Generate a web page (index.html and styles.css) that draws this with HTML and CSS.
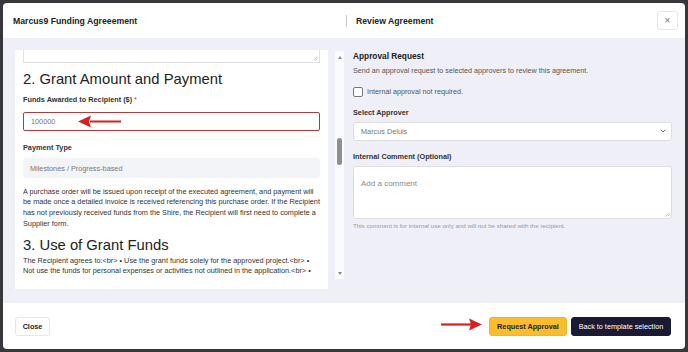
FILE: index.html
```html
<!DOCTYPE html>
<html lang="en">
<head>
<meta charset="utf-8">
<title>Marcus9 Funding Agreeement</title>
<link rel="stylesheet" href="styles.css">
</head>
<body>
<div class="modal">
  <header class="modal-header">
    <div class="hdr-left"><h1 class="hdr-title">Marcus9 Funding Agreeement</h1></div>
    <div class="hdr-right">
      <span class="hdr-divider"></span>
      <h2 class="hdr-title">Review Agreement</h2>
      <button class="x-btn" type="button">&times;</button>
    </div>
  </header>

  <main class="modal-body">
    <section class="doc">
      <div class="doc-card">
        <div class="doc-scroll">
          <div class="ta-stub">
            <svg class="grip" width="5" height="5" viewBox="0 0 5 5"><path d="M0.5 4.5 L4.5 0.5 M2.5 4.5 L4.5 2.5" stroke="#aaa" stroke-width="0.7" fill="none"/></svg>
          </div>
          <h3 class="doc-h">2. Grant Amount and Payment</h3>
          <div class="field-label first">Funds Awarded to Recipient ($) <span class="req">*</span></div>
          <div class="input-wrap">
            <div class="text-input error">100000</div>
            <svg class="arrow arrow-left" width="44" height="13" viewBox="0 0 44 13"><path d="M12 6.5 H43" stroke="#d81f1f" stroke-width="2.2"/><path d="M0 6.5 L13 0.5 L11 6.5 L13 12.5 Z" fill="#d81f1f"/></svg>
          </div>
          <div class="field-label second">Payment Type</div>
          <div class="readonly-box">Milestones / Progress-based</div>
          <p class="doc-p first-p">A purchase order will be issued upon receipt of the executed agreement, and payment will be made once a detailed invoice is received referencing this purchase order. If the Recipient has not previously received funds from the Shire, the Recipient will first need to complete a Supplier form.</p>
          <h3 class="doc-h h-two">3. Use of Grant Funds</h3>
          <p class="doc-p second-p">The Recipient agrees to:&lt;br&gt; • Use the grant funds solely for the approved project.&lt;br&gt; • Not use the funds for personal expenses or activities not outlined in the application.&lt;br&gt; •</p>
        </div>
      </div>
      <div class="scrollbar">
        <div class="sb-btn"><span class="tri-up"></span></div>
        <div class="sb-track"><div class="sb-thumb"></div></div>
        <div class="sb-btn"><span class="tri-down"></span></div>
      </div>
    </section>

    <aside class="review">
      <div class="rv-title">Approval Request</div>
      <div class="rv-desc">Send an approval request to selected approvers to review this agreement.</div>
      <div class="check-row">
        <span class="checkbox"></span>
        <span class="check-label">Internal approval not required.</span>
      </div>
      <div class="rv-label approver">Select Approver</div>
      <div class="select">
        <span>Marcus Deluis</span>
        <svg class="chev" width="6" height="4" viewBox="0 0 6 4"><path d="M0.7 0.8 L3 3 L5.3 0.8" stroke="#666" stroke-width="1" fill="none"/></svg>
      </div>
      <div class="rv-label comment">Internal Comment (Optional)</div>
      <div class="textarea">
        <span class="placeholder">Add a comment</span>
        <svg class="grip" width="5" height="5" viewBox="0 0 5 5"><path d="M0.5 4.5 L4.5 0.5 M2.5 4.5 L4.5 2.5" stroke="#aaa" stroke-width="0.7" fill="none"/></svg>
      </div>
      <div class="helper">This comment is for internal use only and will not be shared with the recipient.</div>
    </aside>
  </main>

  <footer class="modal-footer">
    <button class="btn btn-light" type="button">Close</button>
    <svg class="arrow arrow-right" width="41" height="13" viewBox="0 0 41 13"><path d="M0 6.5 H30" stroke="#d81f1f" stroke-width="2.2"/><path d="M41 6.5 L28 0.5 L30 6.5 L28 12.5 Z" fill="#d81f1f"/></svg>
    <div class="footer-actions">
      <button class="btn btn-amber" type="button">Request Approval</button>
      <button class="btn btn-dark" type="button">Back to template selection</button>
    </div>
  </footer>
</div>
</body>
</html>
```

FILE: styles.css
```css
* { box-sizing: border-box; }

html, body {
  margin: 0;
  padding: 0;
}

body {
  width: 688px;
  height: 352px;
  overflow: hidden;
  background: #38383c;
  font-family: "Liberation Sans", Arial, sans-serif;
  color: #333;
  padding: 3px;
}

.modal {
  width: 682px;
  height: 346px;
  background: #fff;
  border-radius: 4px;
  display: flex;
  flex-direction: column;
  overflow: hidden;
}

/* header */
.modal-header {
  height: 35px;
  display: flex;
  align-items: center;
  flex: none;
}

.hdr-left {
  width: 343px;
  padding-left: 10px;
}

.hdr-title {
  margin: 0;
  font-size: 8.7px;
  font-weight: bold;
  color: #222;
  line-height: 12px;
}

.hdr-right {
  flex: 1;
  display: flex;
  align-items: center;
  padding-right: 7px;
}

.hdr-divider {
  width: 1px;
  height: 12px;
  background: #c8c8c8;
  margin-right: 9px;
}

.x-btn {
  margin-left: auto;
  width: 21px;
  height: 19px;
  border: 1px solid #e6e6e6;
  border-radius: 3px;
  background: #fff;
  color: #777;
  font-family: "Liberation Sans", Arial, sans-serif;
  font-size: 10px;
  line-height: 1;
  padding: 0;
  display: flex;
  align-items: center;
  justify-content: center;
}

/* body */
.modal-body {
  flex: 1;
  background: #efeff7;
  display: flex;
  gap: 9px;
  padding: 12px 13px 14px 12px;
  min-height: 0;
}

.doc {
  width: 329px;
  display: flex;
  gap: 7px;
  flex: none;
}

.doc-card {
  width: 313px;
  background: #fff;
  padding: 0 5px 11px 8px;
  display: flex;
  flex-direction: column;
}

.doc-scroll {
  flex: 1;
  overflow: hidden;
  min-height: 0;
}

.ta-stub {
  height: 13px;
  margin-right: 3px;
  border: 1px solid #e2e2e2;
  border-top: none;
  position: relative;
}

.grip {
  position: absolute;
  right: 1px;
  bottom: 1px;
}

.doc-h {
  margin: 7px 0 0;
  font-size: 14.8px;
  line-height: 18px;
  font-weight: normal;
  color: #222;
}

.doc-h.h-two {
  margin-top: 6.6px;
}

.field-label {
  font-size: 7.3px;
  font-weight: bold;
  line-height: 10px;
  color: #333;
}

.field-label.first { margin-top: 7px; }
.field-label.second { margin-top: 12px; }

.req { color: #c0392b; font-weight: normal; }

.input-wrap {
  position: relative;
  margin-top: 7px;
  margin-right: 3px;
}

.text-input {
  height: 19px;
  border: 1px solid #e2e2e2;
  border-radius: 2px;
  font-size: 7.3px;
  color: #777;
  padding: 0 7px;
  display: flex;
  align-items: center;
}

.text-input.error {
  border-color: #b23a3a;
}

.arrow {
  position: absolute;
}

.arrow-left {
  left: 55px;
  top: 3px;
}

.readonly-box {
  margin-top: 5px;
  margin-right: 3px;
  height: 20px;
  background: #f3f4f7;
  border-radius: 3px;
  font-size: 7.3px;
  color: #777;
  padding: 0 7px;
  display: flex;
  align-items: center;
}

.doc-p {
  margin: 0;
  font-size: 7.3px;
  line-height: 10.7px;
  color: #333;
}

.doc-p.first-p { margin-top: 8.6px; }
.doc-p.second-p { margin-top: 1.6px; margin-right: 3px; }

/* fake scrollbar */
.scrollbar {
  width: 9px;
  height: 228px;
  margin-top: 1px;
  background: #fbfbfd;
  display: flex;
  flex-direction: column;
  align-items: center;
}

.sb-btn {
  height: 12px;
  display: flex;
  align-items: center;
  justify-content: center;
}

.tri-up {
  width: 0;
  height: 0;
  border-left: 2.5px solid transparent;
  border-right: 2.5px solid transparent;
  border-bottom: 3px solid #888;
}

.tri-down {
  width: 0;
  height: 0;
  border-left: 2.5px solid transparent;
  border-right: 2.5px solid transparent;
  border-top: 3px solid #888;
}

.sb-track {
  flex: 1;
  width: 100%;
  display: flex;
  justify-content: center;
}

.sb-thumb {
  width: 5px;
  height: 27px;
  margin-top: 75px;
  background: #8e8e8e;
  border-radius: 3px;
}

/* review panel */
.review {
  width: 319px;
  flex: none;
}

.rv-title {
  font-size: 8.3px;
  font-weight: bold;
  line-height: 12px;
  color: #222;
}

.rv-desc {
  margin-top: 4px;
  font-size: 7.2px;
  line-height: 10px;
  color: #555;
}

.check-row {
  margin-top: 11px;
  display: flex;
  align-items: center;
  gap: 4px;
  height: 10px;
}

.checkbox {
  width: 10px;
  height: 10px;
  border: 1px solid #777;
  border-radius: 2px;
  background: #fff;
}

.check-label {
  font-size: 7.2px;
  color: #555;
  line-height: 10px;
}

.rv-label {
  font-size: 7.3px;
  font-weight: bold;
  line-height: 10px;
  color: #333;
}

.rv-label.approver { margin-top: 10.7px; }
.rv-label.comment { margin-top: 10.7px; }

.select {
  margin-top: 4.3px;
  height: 19px;
  background: #fff;
  border: 1px solid #dedede;
  border-radius: 3px;
  padding: 0 5px 0 7px;
  display: flex;
  align-items: center;
  justify-content: space-between;
  font-size: 7.3px;
  color: #777;
}

.textarea {
  margin-top: 4px;
  height: 53px;
  background: #fff;
  border: 1px solid #dedede;
  border-radius: 3px;
  padding: 5px 7px;
  position: relative;
}

.placeholder {
  font-size: 8px;
  color: #8a8a8a;
  line-height: 10px;
}

.helper {
  margin-top: 2.8px;
  font-size: 6.2px;
  line-height: 9px;
  color: #9a9a9a;
}

/* footer */
.modal-footer {
  height: 46px;
  flex: none;
  display: flex;
  align-items: center;
  justify-content: space-between;
  padding: 0 14px 0 12px;
  position: relative;
}

.arrow-right {
  left: 438px;
  top: 15px;
}

.footer-actions {
  display: flex;
  gap: 4px;
}

.btn {
  height: 19px;
  border-radius: 3px;
  font-family: "Liberation Sans", Arial, sans-serif;
  font-size: 7.25px;
  padding: 0;
  white-space: nowrap;
  display: flex;
  align-items: center;
  justify-content: center;
  cursor: pointer;
}

.btn-light {
  width: 35px;
  background: #fff;
  border: 1px solid #e6e6e6;
  font-weight: bold;
  color: #222;
}

.btn-amber {
  width: 78px;
  background: #fbbd2b;
  border: 1px solid #f5b41f;
  font-weight: bold;
  color: #222;
}

.btn-dark {
  width: 100px;
  background: #1b1a33;
  border: 1px solid #1b1a33;
  color: #fff;
  font-weight: normal;
}
```
